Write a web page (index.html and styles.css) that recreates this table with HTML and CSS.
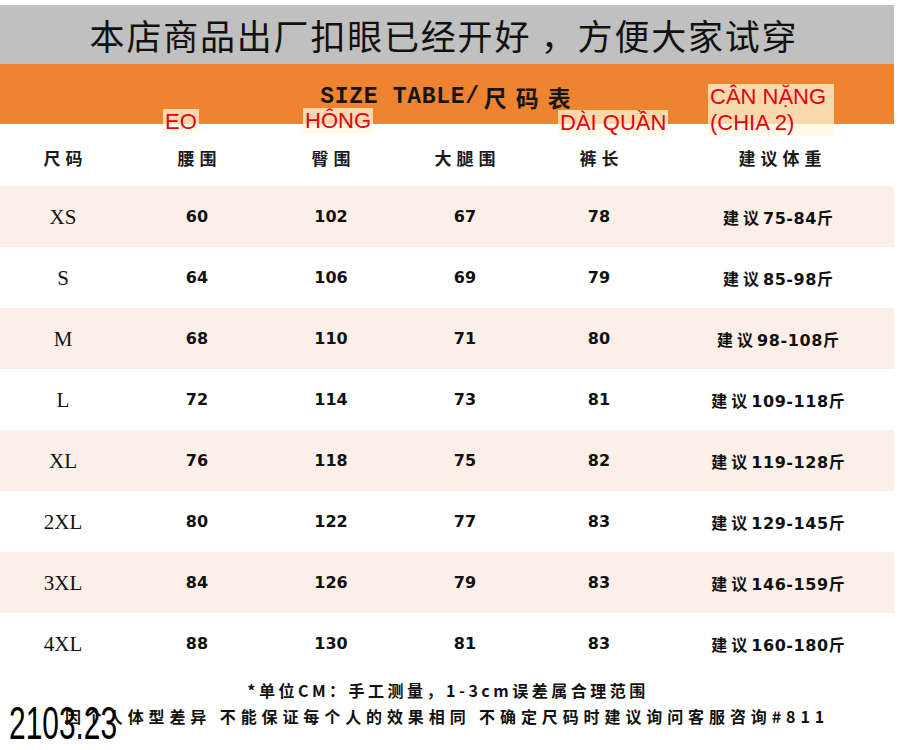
FILE: index.html
```html
<!DOCTYPE html>
<html lang="zh">
<head>
<meta charset="utf-8">
<title>Size Table</title>
<link rel="stylesheet" href="styles.css">
</head>
<body>
<div class="page">
  <div class="banner">本店商品出厂扣眼已经开好 ，方便大家试穿</div>
  <div class="title-band"><span class="latin">SIZE TABLE/</span><span class="cjk">尺码表</span></div>

  <div class="table">
    <div class="row head">
      <div class="cell first">尺码</div>
      <div class="cell">腰围</div>
      <div class="cell">臀围</div>
      <div class="cell">大腿围</div>
      <div class="cell">裤长</div>
      <div class="cell">建议体重</div>
    </div>
    <div class="row alt"><div class="cell size">XS</div><div class="cell num">60</div><div class="cell num">102</div><div class="cell num">67</div><div class="cell num">78</div><div class="cell wt"><span class="zh">建议</span>75-84<span class="zh">斤</span></div></div>
    <div class="row"><div class="cell size">S</div><div class="cell num">64</div><div class="cell num">106</div><div class="cell num">69</div><div class="cell num">79</div><div class="cell wt"><span class="zh">建议</span>85-98<span class="zh">斤</span></div></div>
    <div class="row alt"><div class="cell size">M</div><div class="cell num">68</div><div class="cell num">110</div><div class="cell num">71</div><div class="cell num">80</div><div class="cell wt"><span class="zh">建议</span>98-108<span class="zh">斤</span></div></div>
    <div class="row"><div class="cell size">L</div><div class="cell num">72</div><div class="cell num">114</div><div class="cell num">73</div><div class="cell num">81</div><div class="cell wt"><span class="zh">建议</span>109-118<span class="zh">斤</span></div></div>
    <div class="row alt"><div class="cell size">XL</div><div class="cell num">76</div><div class="cell num">118</div><div class="cell num">75</div><div class="cell num">82</div><div class="cell wt"><span class="zh">建议</span>119-128<span class="zh">斤</span></div></div>
    <div class="row"><div class="cell size">2XL</div><div class="cell num">80</div><div class="cell num">122</div><div class="cell num">77</div><div class="cell num">83</div><div class="cell wt"><span class="zh">建议</span>129-145<span class="zh">斤</span></div></div>
    <div class="row alt"><div class="cell size">3XL</div><div class="cell num">84</div><div class="cell num">126</div><div class="cell num">79</div><div class="cell num">83</div><div class="cell wt"><span class="zh">建议</span>146-159<span class="zh">斤</span></div></div>
    <div class="row"><div class="cell size">4XL</div><div class="cell num">88</div><div class="cell num">130</div><div class="cell num">81</div><div class="cell num">83</div><div class="cell wt"><span class="zh">建议</span>160-180<span class="zh">斤</span></div></div>
  </div>

  <div class="footer">
    <p class="note1">*单位CM：手工测量，1-3cm误差属合理范围</p>
    <p class="note2">因个人体型差异 不能保证每个人的效果相同 不确定尺码时建议询问客服咨询#811</p>
  </div>

  <div class="tag tag-eo">EO</div>
  <div class="tag tag-hong">HÔNG</div>
  <div class="tag tag-dai">DÀI QUẦN</div>
  <div class="tag tag-can">CÂN NẶNG<br>(CHIA 2)</div>
  <div class="stamp">2103.23</div>
</div>
</body>
</html>
```

FILE: styles.css
```css
html, body {
  margin: 0;
  padding: 0;
  background: #ffffff;
}

.page {
  position: relative;
  width: 904px;
  height: 750px;
  padding-top: 5px;
  box-sizing: border-box;
  font-family: "Noto Sans CJK SC", sans-serif;
  color: #111;
  overflow: hidden;
}

.banner {
  width: 894px;
  height: 59px;
  background: #c0c0c0;
  display: flex;
  align-items: center;
  justify-content: center;
  font-family: "Noto Sans CJK SC", sans-serif;
  font-size: 35px;
  letter-spacing: 1.8px;
  color: #111;
  box-sizing: border-box;
  padding-right: 6px;
}

.title-band {
  width: 894px;
  height: 60px;
  background: #ee8430;
  display: flex;
  justify-content: center;
  align-items: flex-start;
  padding-top: 22px;
  padding-left: 6px;
  box-sizing: border-box;
  color: #151515;
}

.title-band .latin {
  font-family: "Liberation Mono", monospace;
  font-weight: 700;
  font-size: 23px;
  letter-spacing: 0.7px;
  line-height: 22px;
}

.title-band .cjk {
  font-family: "Noto Sans CJK SC", sans-serif;
  font-weight: 700;
  font-size: 23px;
  letter-spacing: 9px;
  line-height: 22px;
  padding-left: 4px;
}

.table {
  width: 894px;
}

.row {
  display: grid;
  grid-template-columns: 130px 134px 134px 134px 134px 228px;
  height: 61px;
  align-items: center;
}

.row.head {
  height: 62px;
  padding-top: 4px;
  box-sizing: border-box;
}

.row.alt {
  background: #fbefe8;
}

.cell {
  text-align: center;
}

.head .cell {
  font-family: "Noto Sans CJK SC", sans-serif;
  font-weight: 700;
  font-size: 17px;
  letter-spacing: 5px;
  text-indent: 5px;
  color: #1a1a1a;
}

.head .first {
  padding-right: 4px;
}

.size {
  font-family: "Liberation Serif", serif;
  font-size: 21px;
  color: #111;
  padding-top: 2px;
  padding-right: 4px;
}

.num {
  font-family: "DejaVu Sans", sans-serif;
  font-weight: 700;
  font-size: 16px;
  color: #111;
}

.wt {
  font-family: "DejaVu Sans", sans-serif;
  font-weight: 700;
  font-size: 16px;
  color: #111;
  letter-spacing: 0.6px;
}

.wt .zh {
  font-family: "Noto Sans CJK SC", sans-serif;
  font-weight: 700;
  font-size: 16px;
  letter-spacing: 4px;
}

.footer {
  width: 894px;
  text-align: center;
  padding-top: 4px;
}

.footer p {
  margin: 0;
  font-family: "Noto Sans CJK SC", sans-serif;
  font-weight: 700;
  font-size: 16px;
  color: #111;
}

.note1 {
  line-height: 25px;
  letter-spacing: 3.5px;
  padding-left: 2px;
}

.note2 {
  line-height: 26px;
  letter-spacing: 4.9px;
  padding-left: 0;
  white-space: nowrap;
}

.tag {
  position: absolute;
  background: rgba(255, 250, 222, 0.72);
  color: #e60012;
  font-family: "Liberation Sans", sans-serif;
  font-size: 22px;
  line-height: 26px;
  padding: 0 2px;
  white-space: nowrap;
}

.tag-eo { left: 163px; top: 109px; }
.tag-hong { left: 303px; top: 108px; }
.tag-dai { left: 558px; top: 110px; }
.tag-can { left: 708px; top: 84px; line-height: 26px; padding-right: 8px; }

.stamp {
  position: absolute;
  left: 9px;
  top: 699px;
  font-family: "Liberation Sans", sans-serif;
  font-size: 46px;
  line-height: 48px;
  color: #000;
  transform: scaleX(0.65);
  transform-origin: left top;
}
```
